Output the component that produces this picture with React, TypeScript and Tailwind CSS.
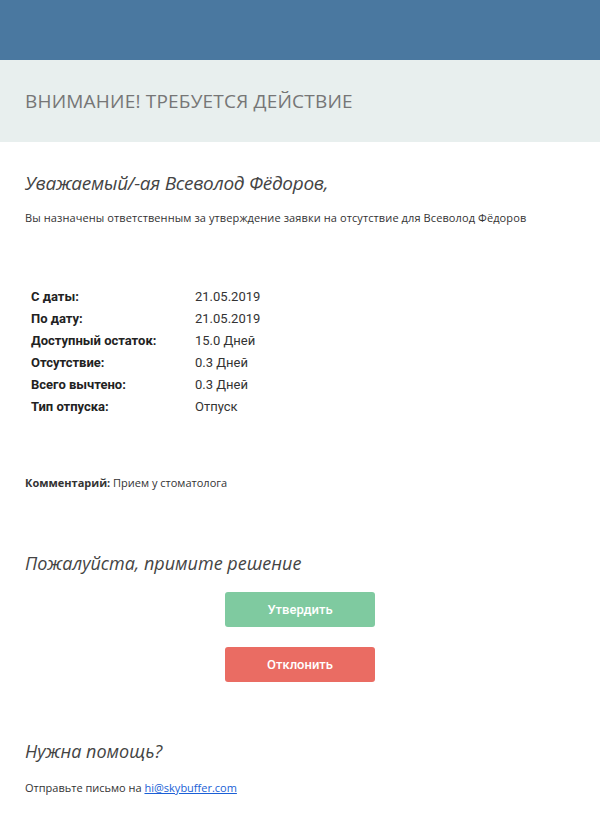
import React from 'react';

const rows: [string, string][] = [
  ['С даты:', '21.05.2019'],
  ['По дату:', '21.05.2019'],
  ['Доступный остаток:', '15.0 Дней'],
  ['Отсутствие:', '0.3 Дней'],
  ['Всего вычтено:', '0.3 Дней'],
  ['Тип отпуска:', 'Отпуск'],
];

const App = () => {
  return (
    <div className="w-[600px] min-h-[820px] bg-white font-['Open_Sans',sans-serif] text-[#333]">
      {/* top bar */}
      <div className="h-[60px] bg-[#4a78a0]" />
      <div className="h-[82px] bg-[#e8efee] flex items-center px-[25px]">
        <h1 className="text-[19px] text-[#767676] tracking-[0.2px]">ВНИМАНИЕ! ТРЕБУЕТСЯ ДЕЙСТВИЕ</h1>
      </div>

      <div className="px-[25px]">
        <h2 className="mt-[27px] text-[19px] italic text-[#444] leading-[28px] tracking-[-0.3px]">Уважаемый/-ая Всеволод Фёдоров,</h2>
        <p className="mt-[13px] text-[11px] leading-[16px] tracking-[0.1px]">
          Вы назначены ответственным за утверждение заявки на отсутствие для Всеволод Фёдоров
        </p>

        <table className="mt-[60px] ml-[6px] font-['Roboto',sans-serif] text-[13px] text-[#222]">
          <tbody>
            {rows.map(([k, v]) => (
              <tr key={k} className="h-[22px]">
                <td className="w-[164px] font-bold">{k}</td>
                <td className="text-[#333]">{v}</td>
              </tr>
            ))}
          </tbody>
        </table>

        <p className="mt-[57px] text-[11px] leading-[16px]">
          <span className="font-bold">Комментарий:</span> Прием у стоматолога
        </p>

        <h2 className="mt-[58px] text-[18px] italic text-[#444] leading-[28px]">Пожалуйста, примите решение</h2>

        <div className="mt-[15px] flex flex-col items-center gap-[20px]">
          <button className="w-[150px] h-[35px] rounded-[3px] bg-[#7fcaa0] text-white text-[13px] font-medium font-['Roboto',sans-serif]">Утвердить</button>
          <button className="w-[150px] h-[35px] rounded-[3px] bg-[#ea6c63] text-white text-[13px] font-medium font-['Roboto',sans-serif]">Отклонить</button>
        </div>

        <h2 className="mt-[55px] text-[18px] italic text-[#444] leading-[28px]">Нужна помощь?</h2>
        <p className="mt-[15px] text-[11px] leading-[16px]">
          Отправьте письмо на{' '}
          <a href="#" className="text-[#1a5fd6] underline">hi@skybuffer.com</a>
        </p>
      </div>
    </div>
  );
};

export default App;
